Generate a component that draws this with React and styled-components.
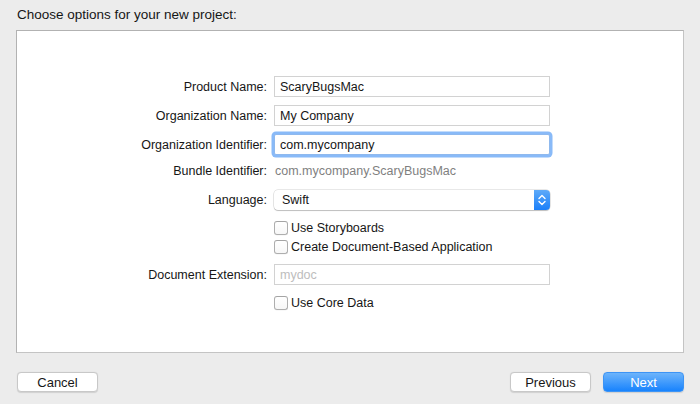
import React from "react";
import styled, { createGlobalStyle } from "styled-components";

const GlobalStyle = createGlobalStyle`
  html, body {
    margin: 0;
    padding: 0;
    background: #ececec;
  }
  body {
    font-family: "Liberation Sans", Arial, sans-serif;
    color: #1a1a1a;
  }
`;

const rows = [
  { label: "Product Name:", kind: "field", value: "ScaryBugsMac", gap: 45 },
  { label: "Organization Name:", kind: "field", value: "My Company", gap: 8 },
  { label: "Organization Identifier:", kind: "focus", value: "com.mycompany", gap: 8 },
  { label: "Bundle Identifier:", kind: "text", value: "com.mycompany.ScaryBugsMac", gap: 8 },
  { label: "Language:", kind: "popup", value: "Swift", gap: 11 },
  { label: "", kind: "check", value: "Use Storyboards", gap: 10 },
  { label: "", kind: "check", value: "Create Document-Based Application", gap: 3 },
  { label: "Document Extension:", kind: "placeholder", value: "mydoc", gap: 9 },
  { label: "", kind: "check", value: "Use Core Data", gap: 10 },
];

const rowHeight = (kind) => {
  if (kind === "popup") return 20;
  if (kind === "check" || kind === "text") return 16;
  return 21;
};

const App = () => {
  const renderControl = (row) => {
    switch (row.kind) {
      case "field":
        return <Field>{row.value}</Field>;
      case "focus":
        return <Field $focus>{row.value}</Field>;
      case "placeholder":
        return <Field $placeholder>{row.value}</Field>;
      case "text":
        return <StaticText>{row.value}</StaticText>;
      case "popup":
        return (
          <Popup>
            <span>{row.value}</span>
            <Stepper>
              <svg width="8" height="12" viewBox="0 0 8 12">
                <path
                  d="M1 4.5 L4 1.5 L7 4.5 M1 7.5 L4 10.5 L7 7.5"
                  fill="none"
                  stroke="#fff"
                  strokeWidth="1.4"
                  strokeLinecap="round"
                  strokeLinejoin="round"
                />
              </svg>
            </Stepper>
          </Popup>
        );
      case "check":
        return (
          <CheckLabel>
            <CheckBox />
            {row.value}
          </CheckLabel>
        );
      default:
        return null;
    }
  };

  return (
    <>
      <GlobalStyle />
      <Page>
        <Title>Choose options for your new project:</Title>
        <Panel>
          {rows.map((row, i) => (
            <Row key={i} $gap={row.gap} $tall={rowHeight(row.kind)}>
              <Label>{row.label}</Label>
              {renderControl(row)}
            </Row>
          ))}
        </Panel>
        <Footer>
          <Button>Cancel</Button>
          <ButtonGroup>
            <Button>Previous</Button>
            <Button $primary>Next</Button>
          </ButtonGroup>
        </Footer>
      </Page>
    </>
  );
};

const Page = styled.div`
  width: 700px;
  height: 404px;
  box-sizing: border-box;
  padding: 0 16px;
  display: flex;
  flex-direction: column;
`;

const Title = styled.div`
  height: 30px;
  box-sizing: border-box;
  padding: 7px 0 0 1px;
  font-size: 13.5px;
  line-height: 16px;
  color: #161616;
`;

const Panel = styled.div`
  height: 323px;
  box-sizing: border-box;
  background: #fff;
  border: 1px solid #b2b2b2;
  border-right-color: #c4c4c4;
  border-bottom-color: #c4c4c4;
  display: flex;
  flex-direction: column;
`;

const Row = styled.div`
  display: grid;
  grid-template-columns: 250px 276px;
  column-gap: 7px;
  align-items: center;
  height: ${(p) => p.$tall}px;
  margin-top: ${(p) => p.$gap}px;
`;

const Label = styled.div`
  text-align: right;
  font-size: 12.5px;
  color: #161616;
  white-space: nowrap;
`;

const Field = styled.div`
  height: 21px;
  box-sizing: border-box;
  border: 1px solid #d2d2d2;
  background: #fff;
  padding: 0 5px;
  display: flex;
  align-items: center;
  font-size: 12.5px;
  color: ${(p) => (p.$placeholder ? "#bdbdbd" : "#161616")};
  ${(p) =>
    p.$focus &&
    `
    border-color: #8fb9ee;
    border-radius: 2px;
    box-shadow: 0 0 0 2.5px rgba(98, 163, 245, 0.75);
  `}
`;

const StaticText = styled.div`
  font-size: 12.5px;
  color: #7f7f7f;
  padding-left: 1px;
`;

const Popup = styled.div`
  height: 20px;
  box-sizing: border-box;
  border-radius: 4px;
  background: #fff;
  box-shadow: 0 0 0 0.5px rgba(0, 0, 0, 0.18), 0 1px 1px rgba(0, 0, 0, 0.18);
  display: flex;
  align-items: center;
  justify-content: space-between;
  padding-left: 8px;
  font-size: 12.5px;
  color: #161616;
  overflow: hidden;
`;

const Stepper = styled.div`
  width: 16px;
  height: 100%;
  background: linear-gradient(#5eaaf9, #1a7ff9);
  display: flex;
  align-items: center;
  justify-content: center;
`;

const CheckLabel = styled.div`
  display: flex;
  align-items: center;
  gap: 3px;
  font-size: 12.5px;
  color: #161616;
  white-space: nowrap;
`;

const CheckBox = styled.span`
  width: 14px;
  height: 14px;
  box-sizing: border-box;
  border: 1px solid #aeaeae;
  border-top-color: #a4a4a4;
  border-radius: 3px;
  background: linear-gradient(#fff, #f7f7f7);
  box-shadow: 0 0.5px 0.5px rgba(0, 0, 0, 0.06);
`;

const Footer = styled.div`
  margin-top: 19px;
  display: flex;
  justify-content: space-between;
  padding-left: 1px;
`;

const ButtonGroup = styled.div`
  display: flex;
  gap: 12px;
`;

const Button = styled.div`
  width: 81px;
  height: 20px;
  box-sizing: border-box;
  border-radius: 4px;
  display: flex;
  align-items: center;
  justify-content: center;
  font-size: 13px;
  background: ${(p) => (p.$primary ? "linear-gradient(#6db4fb, #1883fd)" : "#fff")};
  color: ${(p) => (p.$primary ? "#fff" : "#161616")};
  border: 1px solid ${(p) => (p.$primary ? "#3d94f5" : "#c8c8c8")};
  box-shadow: 0 0.5px 1px rgba(0, 0, 0, 0.12);
`;

export default App;
